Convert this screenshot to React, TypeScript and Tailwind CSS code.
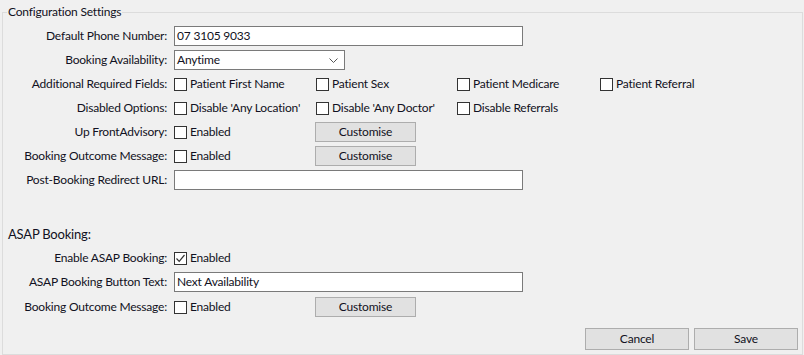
import React from "react";

const Label = ({ children }: { children: React.ReactNode }) => (
  <div className="w-[164px] text-right whitespace-nowrap">{children}</div>
);

const Check = ({ label, checked = false, w = "w-[142px]" }: { label: string; checked?: boolean; w?: string }) => (
  <div className={`flex items-center ${w} whitespace-nowrap`}>
    <div className="w-[13px] h-[13px] border border-[#333333] bg-white flex items-center justify-center shrink-0">
      {checked && (
        <svg width="11" height="11" viewBox="0 0 11 11">
          <path d="M1.5 5.5 L4.2 8.3 L9.5 2" fill="none" stroke="#333333" strokeWidth="1.2" />
        </svg>
      )}
    </div>
    <span className="ml-[3px]">{label}</span>
  </div>
);

const Btn = ({ label, cls = "w-[101px] h-[20px]" }: { label: string; cls?: string }) => (
  <div className={`${cls} bg-[#e1e1e1] border border-[#adadad] flex items-center justify-center`}>{label}</div>
);

const Row = ({ label, children, h = "h-[24px]" }: { label: string; children?: React.ReactNode; h?: string }) => (
  <div className={`flex items-center ${h} gap-x-[7px]`}>
    <Label>{label}</Label>
    <div className="flex items-center">{children}</div>
  </div>
);

const TextBox = ({ value }: { value: string }) => (
  <div className="w-[349px] h-[20px] border border-[#7a7a7a] bg-white pl-[2px] flex items-center">{value}</div>
);

export default function App() {
  return (
    <div
      className="w-[804px] h-[355px] bg-[#f0f0f0] pt-[4px] pl-[2px] text-[12px] leading-[16px] tracking-[-0.2px] text-[#111122]"
      style={{ fontFamily: 'Lato, "Noto Sans", sans-serif' }}
    >
      <fieldset className="w-[801px] h-[351px] border border-[#dcdcdc]">
        <legend className="ml-[4px] px-[1px] leading-[16px]">Configuration Settings</legend>
        <div className="pt-[4px]">
          <Row label="Default Phone Number:">
            <TextBox value="07 3105 9033" />
          </Row>
          <Row label="Booking Availability:">
            <div className="w-[171px] h-[20px] border border-[#7a7a7a] bg-white pl-[2px] pr-[6px] flex items-center justify-between">
              <span>Anytime</span>
              <svg width="9" height="5" viewBox="0 0 9 5">
                <path d="M0.5 0.5 L4.5 4.5 L8.5 0.5" fill="none" stroke="#555" strokeWidth="1" />
              </svg>
            </div>
          </Row>
          <Row label="Additional Required Fields:">
            <Check label="Patient First Name" />
            <Check label="Patient Sex" w="w-[141px]" />
            <Check label="Patient Medicare" w="w-[143px]" />
            <Check label="Patient Referral" />
          </Row>
          <Row label="Disabled Options:">
            <Check label="Disable 'Any Location'" />
            <Check label="Disable 'Any Doctor'" w="w-[141px]" />
            <Check label="Disable Referrals" />
          </Row>
          <Row label="Up FrontAdvisory:">
            <Check label="Enabled" w="w-[141px]" />
            <Btn label="Customise" />
          </Row>
          <Row label="Booking Outcome Message:">
            <Check label="Enabled" w="w-[141px]" />
            <Btn label="Customise" />
          </Row>
          <Row label="Post-Booking Redirect URL:">
            <TextBox value="" />
          </Row>
          <div className="h-[54px] flex items-end pl-[5px] pb-[4px] text-[13px]">ASAP Booking:</div>
          <Row label="Enable ASAP Booking:">
            <Check label="Enabled" checked />
          </Row>
          <Row label="ASAP Booking Button Text:">
            <TextBox value="Next Availability" />
          </Row>
          <Row label="Booking Outcome Message:" h="h-[26px]">
            <Check label="Enabled" w="w-[141px]" />
            <Btn label="Customise" />
          </Row>
          <div className="flex justify-end gap-x-[5px] pr-[4px] pt-[8px]">
            <Btn label="Cancel" cls="w-[104px] h-[22px]" />
            <Btn label="Save" cls="w-[104px] h-[22px]" />
          </div>
        </div>
      </fieldset>
    </div>
  );
}
